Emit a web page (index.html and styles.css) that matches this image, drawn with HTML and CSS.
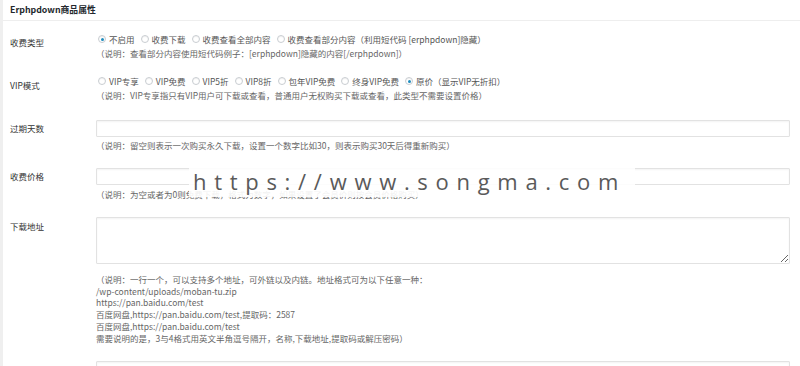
FILE: index.html
```html
<!DOCTYPE html>
<html lang="zh-CN">
<head>
<meta charset="utf-8">
<title>Erphpdown商品属性</title>
<link rel="stylesheet" href="styles.css">
</head>
<body>
<div class="box">
  <div class="box-head">Erphpdown商品属性</div>

  <div class="row row-type">
    <div class="label">收费类型</div>
    <div class="field">
      <div class="radios">
        <label class="opt"><input type="radio" name="t" checked><span>不启用</span></label>
        <label class="opt"><input type="radio" name="t"><span>收费下载</span></label>
        <label class="opt"><input type="radio" name="t"><span>收费查看全部内容</span></label>
        <label class="opt"><input type="radio" name="t"><span>收费查看部分内容（利用短代码 [erphpdown]隐藏）</span></label>
      </div>
      <p class="desc">（说明：查看部分内容使用短代码例子：[erphpdown]隐藏的内容[/erphpdown]）</p>
    </div>
  </div>

  <div class="row row-vip">
    <div class="label">VIP模式</div>
    <div class="field">
      <div class="radios">
        <label class="opt"><input type="radio" name="v"><span>VIP专享</span></label>
        <label class="opt"><input type="radio" name="v"><span>VIP免费</span></label>
        <label class="opt"><input type="radio" name="v"><span>VIP5折</span></label>
        <label class="opt"><input type="radio" name="v"><span>VIP8折</span></label>
        <label class="opt"><input type="radio" name="v"><span>包年VIP免费</span></label>
        <label class="opt"><input type="radio" name="v"><span>终身VIP免费</span></label>
        <label class="opt"><input type="radio" name="v" checked><span>原价（显示VIP无折扣）</span></label>
      </div>
      <p class="desc">（说明：VIP专享指只有VIP用户可下载或查看，普通用户无权购买下载或查看，此类型不需要设置价格）</p>
    </div>
  </div>

  <div class="row row-input row-days">
    <div class="label">过期天数</div>
    <div class="field">
      <input class="text" type="text">
      <p class="desc">（说明：留空则表示一次购买永久下载，设置一个数字比如30，则表示购买30天后得重新购买）</p>
    </div>
  </div>

  <div class="row row-input row-price">
    <div class="label">收费价格</div>
    <div class="field">
      <input class="text" type="text">
      <p class="desc">（说明：为空或者为0则免费下载，格式为数字，如果设置了会员价则按会员价格购买）</p>
    </div>
  </div>

  <div class="row row-url">
    <div class="label">下载地址</div>
    <div class="field">
      <textarea class="area"></textarea>
      <p class="desc desc-lines">（说明：一行一个，可以支持多个地址，可外链以及内链。地址格式可为以下任意一种：<br>/wp-content/uploads/moban-tu.zip<br>https://pan.baidu.com/test<br>百度网盘,https://pan.baidu.com/test,提取码：2587<br>百度网盘,https://pan.baidu.com/test<br>需要说明的是，3与4格式用英文半角逗号隔开，名称,下载地址,提取码或解压密码）</p>
    </div>
  </div>

  <div class="row row-input row-last">
    <div class="label"></div>
    <div class="field">
      <input class="text" type="text">
    </div>
  </div>

  <div class="watermark">https://www.songma.com</div>
</div>
</body>
</html>
```

FILE: styles.css
```css
html, body {
  margin: 0;
  padding: 0;
  background: #ffffff;
  overflow: hidden;
}

body {
  font-family: "Noto Sans CJK SC", "Noto Sans", sans-serif;
  font-size: 8.5px;
  color: #444;
  width: 800px;
  height: 366px;
}

.box {
  position: relative;
  border-left: 3px solid #efefef;
  height: 366px;
}

.box-head {
  height: 20px;
  line-height: 20px;
  padding-left: 7px;
  font-weight: 700;
  font-size: 8.8px;
  color: #23282d;
  border-bottom: 1px solid #eeeeee;
}

.row {
  display: flex;
  padding-right: 10px;
}

.label {
  width: 86px;
  padding-left: 7px;
  flex-shrink: 0;
  color: #333;
  line-height: 14px;
}

.field {
  flex: 1;
  min-width: 0;
}

.radios {
  display: flex;
  align-items: center;
  height: 14px;
  white-space: nowrap;
}

.opt {
  display: inline-flex;
  align-items: center;
  margin-right: 4px;
  color: #555;
}

.opt input {
  -webkit-appearance: none;
  appearance: none;
  width: 8px;
  height: 8px;
  margin: 0 3px 0 2px;
  border: 1px solid #c9cdd1;
  border-radius: 50%;
  background: #fff;
  box-shadow: inset 0 1px 1px rgba(0,0,0,0.06);
  position: relative;
  flex-shrink: 0;
}

.opt input:checked::after {
  content: "";
  position: absolute;
  left: 1.5px;
  top: 1.5px;
  width: 3px;
  height: 3px;
  border-radius: 50%;
  background: #1e8cbe;
}

.desc {
  margin: 0;
  line-height: 14px;
  color: #666;
  white-space: nowrap;
}

.row-type { margin-top: 11px; }
.row-type .label { padding-top: 3px; }

.row-vip { margin-top: 14px; }
.row-vip .label { padding-top: 4px; }

.row-input .label { line-height: 17px; }

.text {
  display: block;
  box-sizing: border-box;
  width: 100%;
  height: 17px;
  margin: 0;
  padding: 0 4px;
  border: 1px solid #e2e2e2;
  border-radius: 1px;
  background: #fff;
  box-shadow: inset 0 1px 2px rgba(0,0,0,0.05);
  font: inherit;
}

.row-days { margin-top: 18px; }
.row-days .desc { margin-top: 1px; }

.row-price { margin-top: 16px; }
.row-price .desc { margin-top: 2px; }

.row-url { margin-top: 16px; }
.row-url .label { padding-top: 2px; }

.area {
  display: block;
  box-sizing: border-box;
  width: 100%;
  height: 47px;
  margin: 0;
  padding: 2px 4px;
  border: 1px solid #e2e2e2;
  border-radius: 1px;
  background: #fff;
  box-shadow: inset 0 1px 2px rgba(0,0,0,0.05);
  resize: vertical;
  font: inherit;
}

.desc-lines {
  margin-top: 10px;
  line-height: 11.7px;
}

.row-last { margin-top: 17px; }

.watermark {
  position: absolute;
  left: 186px;
  top: 165px;
  width: 446px;
  height: 32px;
  padding-left: 4px;
  box-sizing: border-box;
  background: rgba(255,255,255,0.9);
  font-family: "Open Sans", "DejaVu Sans", sans-serif;
  font-size: 22px;
  line-height: 32px;
  letter-spacing: 7.7px;
  color: #5a5a5a;
  white-space: nowrap;
}
```
